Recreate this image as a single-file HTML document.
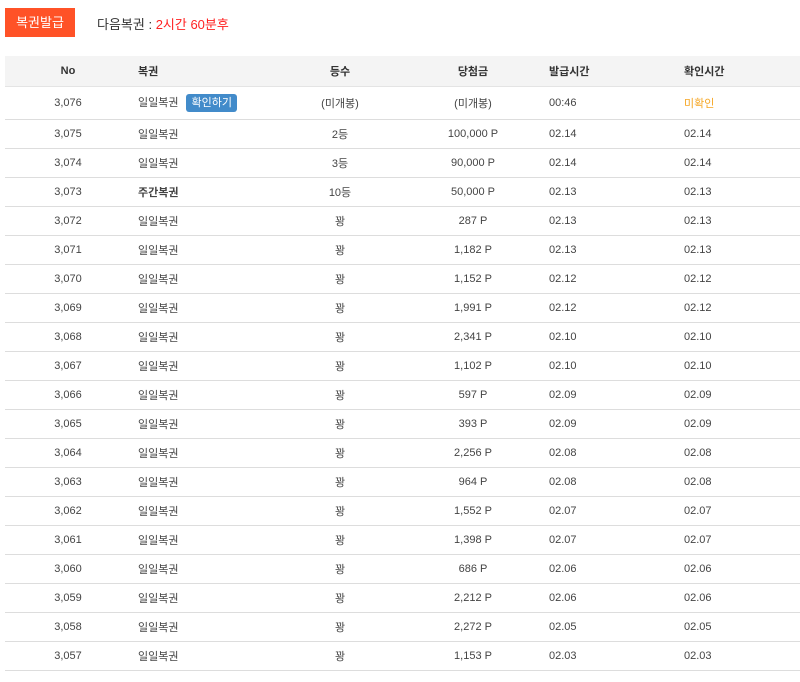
<!DOCTYPE html>
<html><head><meta charset="utf-8"><style>
body{margin:0;background:#fff;font-family:"Liberation Sans","Noto Sans CJK KR",sans-serif;font-size:11px;color:#444;}
.top{position:absolute;left:5px;top:8px;height:29px;}
.btn{position:absolute;left:0;top:0;width:70px;height:29px;background:#ff5227;color:#fff;font-size:13px;line-height:29px;text-align:center;}
.next{position:absolute;left:92px;top:6px;font-size:13px;white-space:nowrap;color:#333;}
.next span{color:#f22;}
table{position:absolute;left:5px;top:56px;width:795px;border-collapse:collapse;table-layout:fixed;}
th{background:#f4f4f4;height:30px;font-weight:bold;font-size:11px;color:#333;border-bottom:1px solid #e4e4e4;padding:0;}
td{height:28px;border-bottom:1px solid #ddd;padding:0;white-space:nowrap;}
tr.first td{height:32px;}
.c{text-align:center}.l{text-align:left;padding-left:7px}.l2{text-align:left;padding-left:12px}
.b{display:inline-block;background:#428bca;color:#fff;border-radius:3px;padding:0 5px;height:18px;line-height:18px;margin-left:8px;font-size:11px;}
.o{color:#f5a623}
</style></head><body>
<div class="top"><div class="btn">복권발급</div><div class="next">다음복권 : <span>2시간 60분후</span></div></div>
<table>
<colgroup><col style="width:126px"><col style="width:140px"><col style="width:138px"><col style="width:128px"><col style="width:135px"><col></colgroup>
<tr><th class="c">No</th><th class="l">복권</th><th class="c">등수</th><th class="c">당첨금</th><th class="l2">발급시간</th><th class="l2">확인시간</th></tr>
<tr class="first"><td class="c">3,076</td><td class="l">일일복권<span class="b">확인하기</span></td><td class="c">(미개봉)</td><td class="c">(미개봉)</td><td class="l2">00:46</td><td class="l2 o">미확인</td></tr>
<tr><td class="c">3,075</td><td class="l">일일복권</td><td class="c">2등</td><td class="c">100,000 P</td><td class="l2">02.14</td><td class="l2">02.14</td></tr>
<tr><td class="c">3,074</td><td class="l">일일복권</td><td class="c">3등</td><td class="c">90,000 P</td><td class="l2">02.14</td><td class="l2">02.14</td></tr>
<tr><td class="c">3,073</td><td class="l"><b>주간복권</b></td><td class="c">10등</td><td class="c">50,000 P</td><td class="l2">02.13</td><td class="l2">02.13</td></tr>
<tr><td class="c">3,072</td><td class="l">일일복권</td><td class="c">꽝</td><td class="c">287 P</td><td class="l2">02.13</td><td class="l2">02.13</td></tr>
<tr><td class="c">3,071</td><td class="l">일일복권</td><td class="c">꽝</td><td class="c">1,182 P</td><td class="l2">02.13</td><td class="l2">02.13</td></tr>
<tr><td class="c">3,070</td><td class="l">일일복권</td><td class="c">꽝</td><td class="c">1,152 P</td><td class="l2">02.12</td><td class="l2">02.12</td></tr>
<tr><td class="c">3,069</td><td class="l">일일복권</td><td class="c">꽝</td><td class="c">1,991 P</td><td class="l2">02.12</td><td class="l2">02.12</td></tr>
<tr><td class="c">3,068</td><td class="l">일일복권</td><td class="c">꽝</td><td class="c">2,341 P</td><td class="l2">02.10</td><td class="l2">02.10</td></tr>
<tr><td class="c">3,067</td><td class="l">일일복권</td><td class="c">꽝</td><td class="c">1,102 P</td><td class="l2">02.10</td><td class="l2">02.10</td></tr>
<tr><td class="c">3,066</td><td class="l">일일복권</td><td class="c">꽝</td><td class="c">597 P</td><td class="l2">02.09</td><td class="l2">02.09</td></tr>
<tr><td class="c">3,065</td><td class="l">일일복권</td><td class="c">꽝</td><td class="c">393 P</td><td class="l2">02.09</td><td class="l2">02.09</td></tr>
<tr><td class="c">3,064</td><td class="l">일일복권</td><td class="c">꽝</td><td class="c">2,256 P</td><td class="l2">02.08</td><td class="l2">02.08</td></tr>
<tr><td class="c">3,063</td><td class="l">일일복권</td><td class="c">꽝</td><td class="c">964 P</td><td class="l2">02.08</td><td class="l2">02.08</td></tr>
<tr><td class="c">3,062</td><td class="l">일일복권</td><td class="c">꽝</td><td class="c">1,552 P</td><td class="l2">02.07</td><td class="l2">02.07</td></tr>
<tr><td class="c">3,061</td><td class="l">일일복권</td><td class="c">꽝</td><td class="c">1,398 P</td><td class="l2">02.07</td><td class="l2">02.07</td></tr>
<tr><td class="c">3,060</td><td class="l">일일복권</td><td class="c">꽝</td><td class="c">686 P</td><td class="l2">02.06</td><td class="l2">02.06</td></tr>
<tr><td class="c">3,059</td><td class="l">일일복권</td><td class="c">꽝</td><td class="c">2,212 P</td><td class="l2">02.06</td><td class="l2">02.06</td></tr>
<tr><td class="c">3,058</td><td class="l">일일복권</td><td class="c">꽝</td><td class="c">2,272 P</td><td class="l2">02.05</td><td class="l2">02.05</td></tr>
<tr><td class="c">3,057</td><td class="l">일일복권</td><td class="c">꽝</td><td class="c">1,153 P</td><td class="l2">02.03</td><td class="l2">02.03</td></tr>
</table>
</body></html>
